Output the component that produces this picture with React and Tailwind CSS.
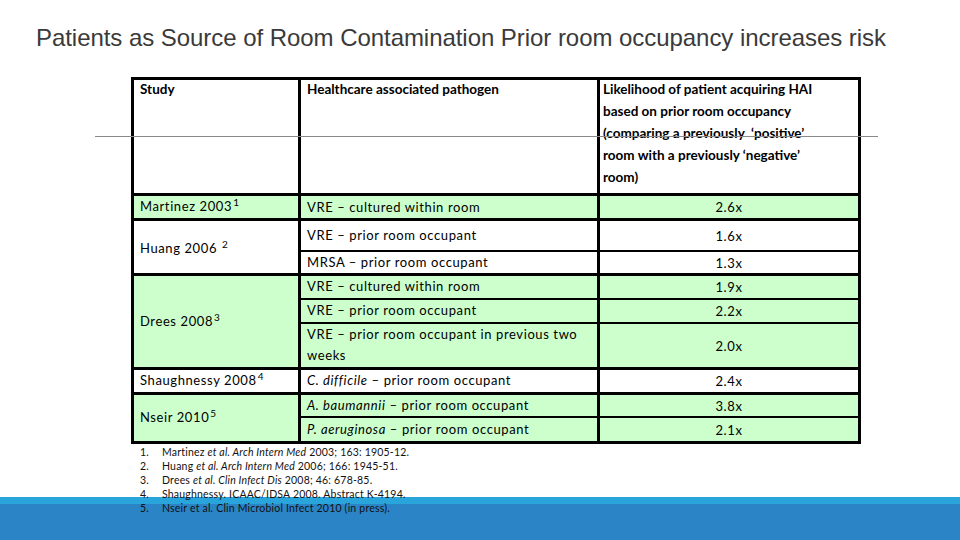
import React from "react";

const green = "bg-[#ccffcc]";

const rows = [
  { study: "Martinez 2003", sup: "1", span: 1, bg: green, path: "VRE – cultured within room", val: "2.6x", h: "h-[25px]", major: true },
  { study: "Huang 2006 ", sup: "2", span: 2, bg: "bg-white", path: "VRE – prior room occupant", val: "1.6x", h: "h-[31px]", major: true, top: true },
  { path: "MRSA – prior room occupant", val: "1.3x", h: "h-[23px]", bg: "bg-white" },
  { study: "Drees 2008", sup: "3", span: 3, bg: green, path: "VRE – cultured within  room", val: "1.9x", h: "h-[24px]", major: true },
  { path: "VRE – prior room occupant", val: "2.2x", h: "h-[24px]", bg: green },
  { path: "VRE – prior room occupant in previous two weeks", val: "2.0x", h: "h-[46px]", bg: green },
  { study: "Shaughnessy 2008", sup: "4", span: 1, bg: "bg-white", italic: "C. difficile", path: " – prior room occupant", val: "2.4x", h: "h-[23px]", major: true },
  { study: "Nseir 2010", sup: "5", span: 2, bg: green, italic: "A. baumannii", path: " – prior room occupant", val: "3.8x", h: "h-[24px]", major: true },
  { italic: "P. aeruginosa", path: " – prior room occupant", val: "2.1x", h: "h-[25px]", bg: green },
];

const notes = [
  ["Martinez ", "et al. Arch Intern Med", " 2003; 163: 1905-12."],
  ["Huang ", "et al. Arch Intern Med", " 2006; 166: 1945-51."],
  ["Drees ", "et al. Clin Infect Dis", " 2008; 46: 678-85."],
  ["Shaughnessy. ICAAC/IDSA 2008. Abstract K-4194.", "", ""],
  ["Nseir et al. Clin Microbiol Infect 2010 (in press).", "", ""],
];

export default function App() {
  return (
    <div className="relative w-[960px] h-[540px] overflow-hidden bg-white font-['Lato',sans-serif] text-black">
      {/* bottom band */}
      <div className="absolute left-0 right-0 bottom-0 h-[43px] flex flex-col">
        <div className="h-[7px] bg-[#2aa5dc]" />
        <div className="flex-1 bg-[#2a84c6]" />
      </div>

      <h1 className="pl-[36px] pt-[23px] h-[77px] font-['Liberation_Sans',sans-serif] text-[24px] leading-[30px] tracking-[-0.05px] text-[#3a3a3a]">
        Patients as Source of Room Contamination Prior room occupancy increases risk
      </h1>

      <div className="relative ml-[131px]">
        <table className="border-collapse border-[3px] border-black text-[13px] tracking-[0.6px]">
          <colgroup>
            <col className="w-[167px]" />
            <col className="w-[299px]" />
            <col className="w-[261px]" />
          </colgroup>
          <thead>
            <tr className="h-[116px] font-bold text-[13.5px] leading-[22px] align-top tracking-[0px]">
              <th className="border-[3px] border-black text-left font-bold pl-[6px]">
                <div className="-mt-[2px]">Study</div>
              </th>
              <th className="border-[3px] border-black text-left font-bold pl-[6px]">
                <div className="-mt-[2px]">Healthcare associated pathogen</div>
              </th>
              <th className="border-[3px] border-black text-left font-bold pl-[3px] pr-[26px]">
                <div className="-mt-[2px]">
                  Likelihood of patient acquiring HAI based on prior room occupancy (comparing a previously &nbsp;‘positive’ room with a previously ‘negative’ room)
                </div>
              </th>
            </tr>
          </thead>
          <tbody>
            {rows.map((r, i) => (
              <tr key={i} className={r.h}>
                {r.study && (
                  <td rowSpan={r.span} className={`${r.bg} border-[3px] border-black pl-[6px] align-middle ${r.top ? "pt-[4px]" : ""}`}>
                    {r.study}
                    <sup className="text-[10px] ml-[1px]">{r.sup}</sup>
                  </td>
                )}
                <td className={`${r.bg} border-black border-x-[3px] ${r.major ? "border-t-[3px]" : "border-t-2"} pl-[6px] pr-2 leading-[21px] align-middle`}>
                  {r.italic && <i>{r.italic}</i>}
                  {r.path}
                </td>
                <td className={`${r.bg} border-black border-x-[3px] ${r.major ? "border-t-[3px]" : "border-t-2"} text-center align-middle pt-[2px]`}>
                  {r.val}
                </td>
              </tr>
            ))}
          </tbody>
        </table>

        {/* divider line over header */}
        <div className="absolute top-[59px] left-[-36px] w-[783px] h-px bg-[#8a8a8a]" />
      </div>

      <ol className="relative ml-[140px] mt-[1px] text-[10.5px] leading-[14px] tracking-[0.2px] text-[#111]">
        {notes.map((n, i) => (
          <li key={i} className="flex">
            <span className="w-[22px]">{i + 1}.</span>
            <span>
              {n[0]}
              {n[1] && <i>{n[1]}</i>}
              {n[2]}
            </span>
          </li>
        ))}
      </ol>
    </div>
  );
}
